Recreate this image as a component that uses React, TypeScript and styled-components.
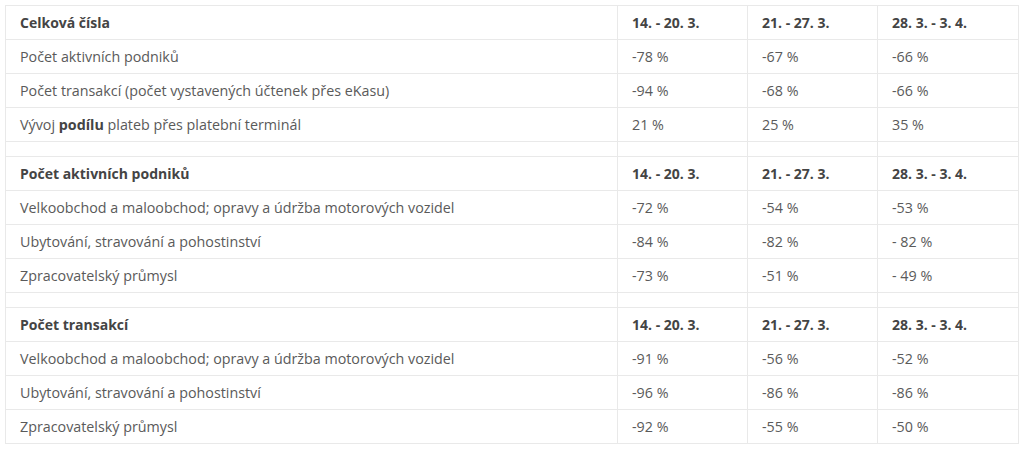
import React from "react";
import styled, { createGlobalStyle } from "styled-components";

const GlobalStyle = createGlobalStyle`
  body {
    margin: 0;
    background: #fff;
    font-family: "Open Sans", "Liberation Sans", sans-serif;
  }
`;

const Page = styled.div`
  padding: 5px 6px 0 5px;
`;

const Table = styled.table`
  width: 1013px;
  border-collapse: collapse;
  table-layout: fixed;
  font-size: 14.3px;
  color: #555;
  border: 1px solid #e6e6e6;
`;

const Cell = styled.td<{ $bold?: boolean }>`
  height: 33px;
  padding: 0 14px;
  border: 1px solid #e9e9e9;
  font-weight: ${({ $bold }) => ($bold ? 700 : 400)};
  font-size: ${({ $bold }) => ($bold ? "14px" : "14.3px")};
  color: ${({ $bold }) => ($bold ? "#444" : "#5a5a5a")};
  white-space: nowrap;
  vertical-align: middle;
`;

const Spacer = styled.td`
  height: 14px;
  padding: 0;
  border: 1px solid #e9e9e9;
`;

const Strong = styled.strong`
  font-weight: 700;
  color: #444;
`;

type Section = {
  title: string;
  rows: { label: React.ReactNode; values: string[] }[];
};

const weeks = ["14. - 20. 3.", "21. - 27. 3.", "28. 3. - 3. 4."];

const sections: Section[] = [
  {
    title: "Celková čísla",
    rows: [
      { label: "Počet aktivních podniků", values: ["-78 %", "-67 %", "-66 %"] },
      {
        label: "Počet transakcí (počet vystavených účtenek přes eKasu)",
        values: ["-94 %", "-68 %", "-66 %"],
      },
      {
        label: (
          <>
            Vývoj <Strong>podílu</Strong> plateb přes platební terminál
          </>
        ),
        values: ["21 %", "25 %", "35 %"],
      },
    ],
  },
  {
    title: "Počet aktivních podniků",
    rows: [
      {
        label: "Velkoobchod a maloobchod; opravy a údržba motorových vozidel",
        values: ["-72 %", "-54 %", "-53 %"],
      },
      { label: "Ubytování, stravování a pohostinství", values: ["-84 %", "-82 %", "- 82 %"] },
      { label: "Zpracovatelský průmysl", values: ["-73 %", "-51 %", "- 49 %"] },
    ],
  },
  {
    title: "Počet transakcí",
    rows: [
      {
        label: "Velkoobchod a maloobchod; opravy a údržba motorových vozidel",
        values: ["-91 %", "-56 %", "-52 %"],
      },
      { label: "Ubytování, stravování a pohostinství", values: ["-96 %", "-86 %", "-86 %"] },
      { label: "Zpracovatelský průmysl", values: ["-92 %", "-55 %", "-50 %"] },
    ],
  },
];

const App = () => {
  return (
    <Page>
      <GlobalStyle />
      <Table>
        <colgroup>
          <col style={{ width: 612 }} />
          <col style={{ width: 130 }} />
          <col style={{ width: 130 }} />
          <col style={{ width: 141 }} />
        </colgroup>
        <tbody>
          {sections.map((section, i) => (
            <React.Fragment key={section.title}>
              {i > 0 && (
                <tr>
                  <Spacer />
                  <Spacer />
                  <Spacer />
                  <Spacer />
                </tr>
              )}
              <tr>
                <Cell $bold>{section.title}</Cell>
                {weeks.map((w) => (
                  <Cell $bold key={w}>
                    {w}
                  </Cell>
                ))}
              </tr>
              {section.rows.map((row, j) => (
                <tr key={j}>
                  <Cell>{row.label}</Cell>
                  {row.values.map((v, k) => (
                    <Cell key={k}>{v}</Cell>
                  ))}
                </tr>
              ))}
            </React.Fragment>
          ))}
        </tbody>
      </Table>
    </Page>
  );
};

export default App;
